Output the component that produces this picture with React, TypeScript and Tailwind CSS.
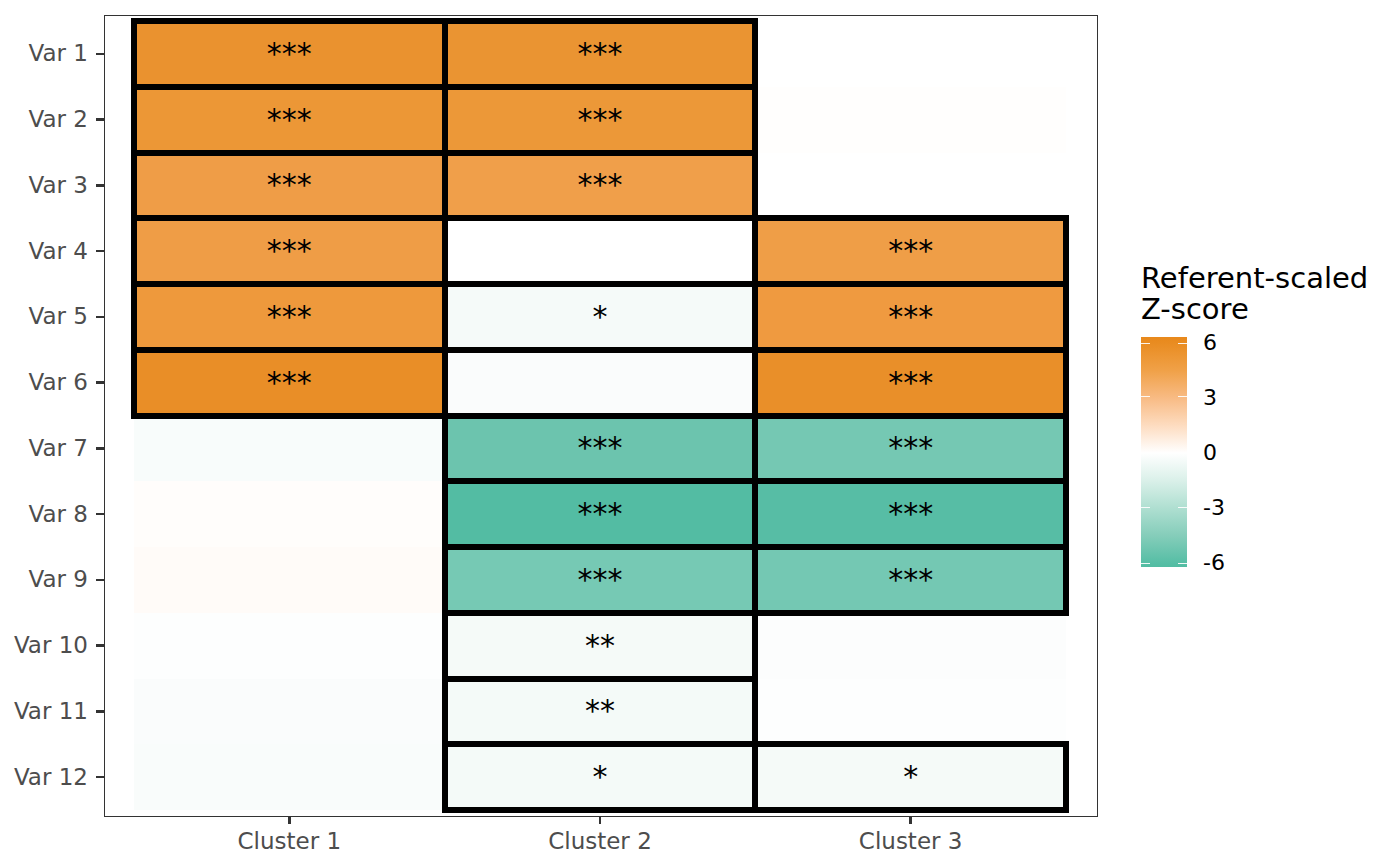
import React from 'react';

type Cell = { bg: string; sig?: string };

// rows Var 1..12, columns Cluster 1..3
const rows: Cell[][] = [
  [{ bg: 'bg-[#EA922F]', sig: '***' }, { bg: 'bg-[#EA9432]', sig: '***' }, { bg: 'bg-[#FFFFFF]' }],
  [{ bg: 'bg-[#EC9736]', sig: '***' }, { bg: 'bg-[#EC9838]', sig: '***' }, { bg: 'bg-[#FFFEFD]' }],
  [{ bg: 'bg-[#EF9D47]', sig: '***' }, { bg: 'bg-[#F09F4A]', sig: '***' }, { bg: 'bg-[#FFFFFF]' }],
  [{ bg: 'bg-[#EF9D46]', sig: '***' }, { bg: 'bg-[#FFFFFF]' }, { bg: 'bg-[#EF9E47]', sig: '***' }],
  [{ bg: 'bg-[#EE993C]', sig: '***' }, { bg: 'bg-[#F5FAF9]', sig: '*' }, { bg: 'bg-[#EF9A40]', sig: '***' }],
  [{ bg: 'bg-[#E98E27]', sig: '***' }, { bg: 'bg-[#FAFCFC]' }, { bg: 'bg-[#E98F29]', sig: '***' }],
  [{ bg: 'bg-[#F8FCFB]' }, { bg: 'bg-[#6CC4AE]', sig: '***' }, { bg: 'bg-[#75C8B3]', sig: '***' }],
  [{ bg: 'bg-[#FFFDFB]' }, { bg: 'bg-[#53BCA3]', sig: '***' }, { bg: 'bg-[#57BDA5]', sig: '***' }],
  [{ bg: 'bg-[#FFFBF8]' }, { bg: 'bg-[#76C9B4]', sig: '***' }, { bg: 'bg-[#74C8B3]', sig: '***' }],
  [{ bg: 'bg-[#FDFEFE]' }, { bg: 'bg-[#F5FAF8]', sig: '**' }, { bg: 'bg-[#FCFDFD]' }],
  [{ bg: 'bg-[#FAFCFC]' }, { bg: 'bg-[#F4FAF8]', sig: '**' }, { bg: 'bg-[#FDFEFE]' }],
  [{ bg: 'bg-[#F9FCFB]' }, { bg: 'bg-[#F4FAF8]', sig: '*' }, { bg: 'bg-[#F5FAF8]', sig: '*' }],
];

const clusters = ['Cluster 1', 'Cluster 2', 'Cluster 3'];
const legendTicks = ['6', '3', '0', '-3', '-6'];

const ColorBar: React.FC = () => (
  <svg width="46" height="230" viewBox="0 0 46 230" className="block">
    <defs>
      <linearGradient id="zscale" x1="0" y1="0" x2="0" y2="1">
        <stop offset="0" stopColor="#E8891B" />
        <stop offset="0.026" stopColor="#E98C21" />
        <stop offset="0.146" stopColor="#F0A148" />
        <stop offset="0.265" stopColor="#F8BB84" />
        <stop offset="0.385" stopColor="#FDDCC0" />
        <stop offset="0.504" stopColor="#FFFFFF" />
        <stop offset="0.624" stopColor="#DAF0E9" />
        <stop offset="0.743" stopColor="#AFDFD1" />
        <stop offset="0.863" stopColor="#85CDBA" />
        <stop offset="0.983" stopColor="#56BEA5" />
        <stop offset="1" stopColor="#52BCA2" />
      </linearGradient>
    </defs>
    <rect x="0" y="0" width="46" height="230" fill="url(#zscale)" />
    {[6, 59, 115, 170, 226].map((y) => (
      <g key={y} stroke="#FFFFFF" strokeWidth="1" opacity="0.9">
        <line x1="0" y1={y + 0.5} x2="9" y2={y + 0.5} />
        <line x1="37" y1={y + 0.5} x2="46" y2={y + 0.5} />
      </g>
    ))}
  </svg>
);

export default function App() {
  return (
    <div className="w-[1400px] h-[866px] bg-white flex font-['DejaVu_Sans',sans-serif] overflow-hidden">
      <div className="grid grid-cols-[104px_994px] grid-rows-[802px_auto] mt-[15px] self-start">
        {/* y axis */}
        <div className="flex flex-col pt-[6px]">
          {rows.map((_, i) => (
            <div key={i} className="h-[65.75px] flex items-center justify-end">
              <span className="text-[23px] leading-none text-[#4D4D4D]">Var {i + 1}</span>
              <div className="w-[8px] h-[2.5px] bg-[#333333] ml-[8px]" />
            </div>
          ))}
        </div>

        {/* panel */}
        <div className="border border-[#333333] bg-white pl-[29px] pt-[5px]">
          <div className="grid grid-cols-3 grid-rows-12 w-[932px] h-[789px]">
            {rows.map((row, r) =>
              row.map((cell, c) => (
                <div
                  key={`${r}-${c}`}
                  className={
                    cell.sig
                      ? `${cell.bg} relative z-10 flex items-center justify-center outline-solid outline-[6px] outline-black outline-offset-[-3px]`
                      : `${cell.bg} flex items-center justify-center`
                  }
                >
                  {cell.sig && (
                    <span className="text-[30px] leading-none text-black">{cell.sig}</span>
                  )}
                </div>
              ))
            )}
          </div>
        </div>

        {/* x axis */}
        <div />
        <div className="pl-[30px]">
          <div className="grid grid-cols-3 w-[932px]">
            {clusters.map((name) => (
              <div key={name} className="flex flex-col items-center">
                <div className="w-[2.5px] h-[7px] bg-[#333333]" />
                <span className="text-[23px] leading-none text-[#4D4D4D] mt-[6px]">{name}</span>
              </div>
            ))}
          </div>
        </div>
      </div>

      {/* legend */}
      <div className="ml-[43px] mt-[263px] self-start">
        <div className="text-[29px] leading-[31px] text-black">
          <div>Referent-scaled</div>
          <div>Z-score</div>
        </div>
        <div className="flex mt-[12px]">
          <ColorBar />
          <div className="flex flex-col ml-[16px] -mt-[21.5px]">
            {legendTicks.map((t) => (
              <div key={t} className="h-[55px] flex items-center text-[22px] leading-none text-black">
                {t}
              </div>
            ))}
          </div>
        </div>
      </div>
    </div>
  );
}
